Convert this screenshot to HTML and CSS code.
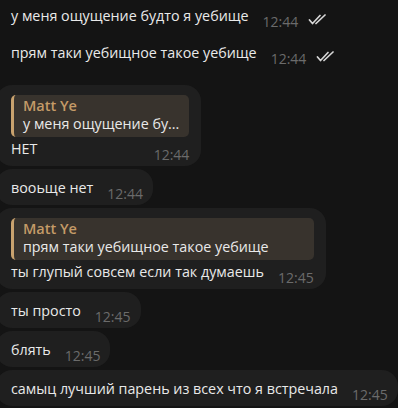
FILE: index.html
```html
<!DOCTYPE html>
<html lang="ru">
<head>
    <meta charset="UTF-8">
    <meta name="viewport" content="width=device-width, initial-scale=1.0">
    <title>Чат</title>
    <link rel="stylesheet" href="styles.css">
</head>
<body>

<div class="chat">
    <!-- Исходящие -->
    <div class="group out">
        <div class="msg">
            <span class="text">у меня ощущение будто я уебище</span>
            <span class="time">12:44</span>
            <svg class="checks" viewBox="0 0 19 11" width="19" height="11"><path d="M1.5 6l3 3.5 7.5-8M8 9.5l9-8.5" fill="none" stroke="#d6d6d6" stroke-width="1.7" stroke-linecap="round" stroke-linejoin="round"/></svg>
        </div>
        <div class="msg">
            <span class="text">прям таки уебищное такое уебище</span>
            <span class="time">12:44</span>
            <svg class="checks" viewBox="0 0 19 11" width="19" height="11"><path d="M1.5 6l3 3.5 7.5-8M8 9.5l9-8.5" fill="none" stroke="#d6d6d6" stroke-width="1.7" stroke-linecap="round" stroke-linejoin="round"/></svg>
        </div>
    </div>

    <!-- Входящие -->
    <div class="group in">
        <div class="msg reply">
            <div class="quote">
                <div class="name">Matt Ye</div>
                <div class="quote-text">у меня ощущение бу...</div>
            </div>
            <div class="row">
                <span class="text">НЕТ</span>
                <span class="time">12:44</span>
            </div>
        </div>
        <div class="msg">
            <span class="text">вооьще нет</span>
            <span class="time">12:44</span>
        </div>
        <div class="msg reply">
            <div class="quote">
                <div class="name">Matt Ye</div>
                <div class="quote-text">прям таки уебищное такое уебище</div>
            </div>
            <div class="row">
                <span class="text">ты глупый совсем если так думаешь</span>
                <span class="time">12:45</span>
            </div>
        </div>
        <div class="msg">
            <span class="text">ты просто</span>
            <span class="time">12:45</span>
        </div>
        <div class="msg">
            <span class="text">блять</span>
            <span class="time">12:45</span>
        </div>
        <div class="msg">
            <span class="text">самыц лучший парень из всех что я встречала</span>
            <span class="time">12:45</span>
        </div>
    </div>
</div>

</body>
</html>
```

FILE: styles.css
```css
body {
    margin: 0;
    background: #141414;
    color: #e9e9e9;
    font-family: "Open Sans", sans-serif;
    font-size: 14.3px;
    overflow: hidden;
}

.chat {
    margin-left: -4px;
    margin-top: -3px;
}

.group {
    display: flex;
    flex-direction: column;
    align-items: flex-start;
    gap: 3px;
}

.group.out {
    gap: 1px;
    margin-bottom: 15px;
}

.msg {
    display: flex;
    align-items: flex-start;
    padding: 9px 10px 7px 15px;
    border-radius: 16px;
    line-height: 20px;
}

.in .msg {
    background: #1f1f1f;
}

.text {
    white-space: nowrap;
}

.time {
    color: #6b6b6b;
    font-size: 14px;
    margin-left: 14px;
    margin-top: 6px;
    margin-bottom: -6px;
}

.checks {
    margin-left: 10px;
    margin-top: 8px;
}

/* ответ с цитатой */
.msg.reply {
    flex-direction: column;
    align-items: stretch;
    padding-top: 10px;
    padding-right: 12px;
}

.quote {
    background: #38332d;
    border-left: 3px solid #c9a26e;
    border-radius: 5px;
    padding: 2px 10px 4px 9px;
    margin-bottom: 2px;
    line-height: 18px;
}

.name {
    color: #c49b68;
    font-weight: 600;
    font-size: 14.5px;
}

.row {
    display: flex;
    justify-content: space-between;
    align-items: flex-start;
}
```
